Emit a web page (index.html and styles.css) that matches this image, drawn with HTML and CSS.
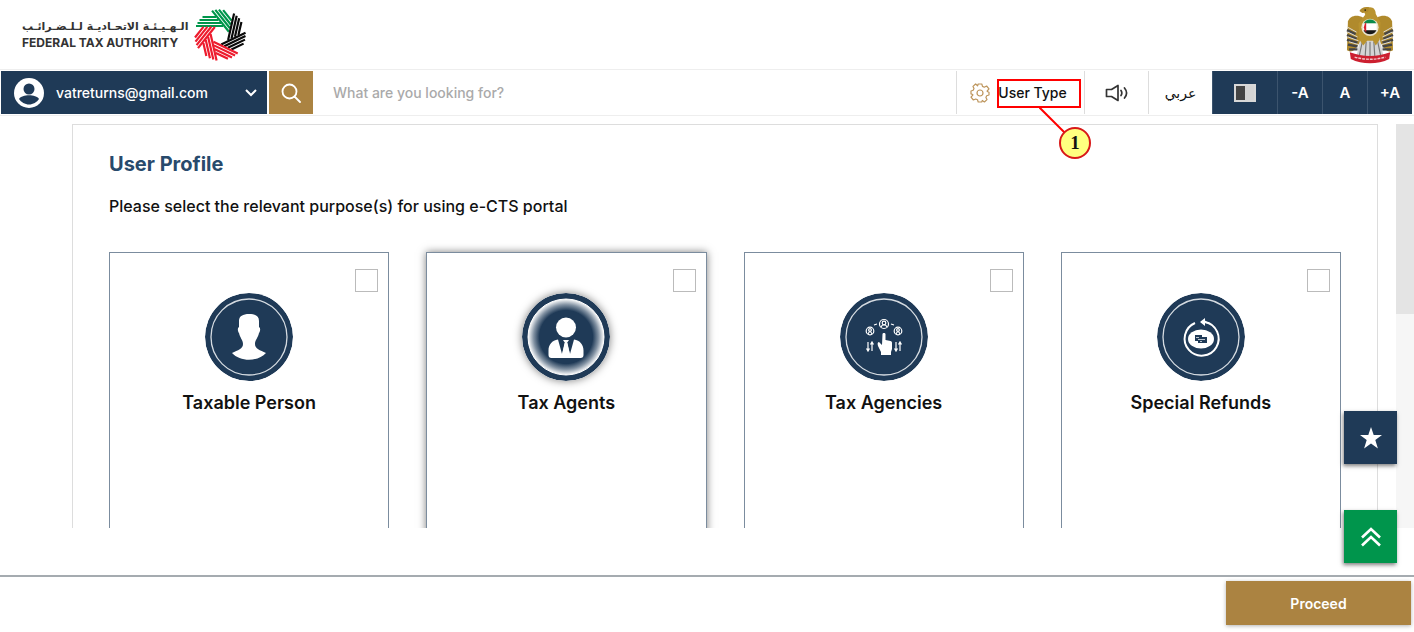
FILE: index.html
```html
<!DOCTYPE html>
<html lang="en">
<head>
    <meta charset="UTF-8">
    <meta name="viewport" content="width=device-width, initial-scale=1.0">
    <title>User Profile - Federal Tax Authority</title>
    <link rel="stylesheet" href="styles.css">
</head>
<body>
    <header class="header">
        <a class="brand" href="#">
            <span class="brand-text">
                <span class="brand-ar" lang="ar" dir="rtl">الـهـيـئـة الاتحـاديـة لـلـضـرائـب</span>
                <span class="brand-en">FEDERAL TAX AUTHORITY</span>
            </span>
            <svg class="brand-logo" viewBox="-27 -27 54 54" fill="none" stroke-width="2.200">
                <defs>
                    <path id="stripes" d="M-24-9H3M-22.500-12H1M-20.500-15H-1.500M-17.500-18H-4"/>
                </defs>
                <g stroke="#00964b">
                    <use href="#stripes"/>
                    <use href="#stripes" transform="rotate(51.4)"/>
                </g>
                <g stroke="#0a0a0a">
                    <use href="#stripes" transform="rotate(102.8)"/>
                    <use href="#stripes" transform="rotate(154.3)"/>
                </g>
                <g stroke="#ed1c2e">
                    <use href="#stripes" transform="rotate(205.7)"/>
                    <use href="#stripes" transform="rotate(257.1)"/>
                    <use href="#stripes" transform="rotate(308.6)"/>
                </g>
            </svg>
        </a>
        <svg class="emblem" viewBox="0 0 50 62">
            <!-- wings -->
            <path d="M18 13C11 9 4 11 2 17L1 47c3 2 6 1 8-1l9-12z" fill="#b08a2c"/>
            <path d="M32 13c7-4 14-2 16 4l1 30c-3 2-6 1-8-1l-9-12z" fill="#b08a2c"/>
            <path d="M1 26l9 4M1 31l10 4M1 36l11 3M2 41l10 2M3 46l9 0M49 26l-9 4M49 31l-10 4M49 36l-11 3M48 41l-10 2M47 46l-9 0" stroke="#454545" stroke-width="2.500"/>
            <path d="M2 23l9 5M2 28l10 5M2 33l11 4M3 38l10 3M48 23l-9 5M48 28l-10 5M48 33l-11 4M47 38l-10 3" stroke="#dedede" stroke-width="1"/>
            <!-- tail and body -->
            <path d="M15 34h20l4 19H11z" fill="#d4d4d4"/>
            <path d="M17 38l-3 14M21 38l-1 15M25 38v15M29 38l1 15M33 38l3 14" stroke="#777" stroke-width="1.200"/>
            <path d="M17 8c1-4 4-6 8-6 4 0 6 3 6 7l5 9-1 18-4 6-3-5h-6l-4 5-4-6-1-17 7-9-1-3z" fill="#b9932f"/>
            <path d="M14 6c1-3 5-5 10-4l-1 5-6 1z" fill="#b08a2c"/>
            <circle cx="20" cy="5" r="0.900" fill="#2b2413"/>
            <!-- flag disc -->
            <circle cx="25" cy="23" r="9" fill="#e9e2cb"/>
            <path d="M18.300 19a7.500 7.500 0 0 1 13.400 0z" fill="#098b4a"/>
            <path d="M18 19h14v7H18z" fill="#fff"/>
            <path d="M18.300 26a7.500 7.500 0 0 0 13.400 0z" fill="#171717"/>
            <path d="M21 17.500v11a7.500 7.500 0 0 1 0-11z" fill="#d9202c"/>
            <!-- ribbon -->
            <path d="M4 49c13 5 29 5 42 0l-1 7c-12 6-28 6-40 0z" fill="#cc1f2f"/>
            <path d="M9 54c10 3 22 3 32 0" fill="none" stroke="#f3c4c7" stroke-width="1.500" stroke-dasharray="3 1"/>
        </svg>
    </header>

    <nav class="toolbar">
        <button class="account" type="button">
            <svg class="avatar" viewBox="0 0 30 30">
                <circle cx="15" cy="15" r="15" fill="#fff"/>
                <circle cx="15" cy="11" r="5.500" fill="#1f3a57"/>
                <path d="M5 21c3-5 17-5 20 0-2 3-6 5.500-10 5.500S7 24 5 21z" fill="#1f3a57"/>
            </svg>
            <span class="account-name">vatreturns@gmail.com</span>
            <svg class="chevron" viewBox="0 0 12 8" fill="none" stroke="#fff" stroke-width="2"><path d="M1 1l5 5 5-5"/></svg>
        </button>
        <button class="search-btn" type="button" aria-label="Search">
            <svg class="search-icon" viewBox="0 0 20 20" fill="none" stroke="#fff" stroke-width="1.800" stroke-linecap="round">
                <circle cx="8.500" cy="8.500" r="7"/><path d="M13.500 13.500L19 19"/>
            </svg>
        </button>
        <input class="search-input" type="search" placeholder="What are you looking for?" aria-label="Search the portal">

        <button class="tool user-type" type="button">
            <svg class="gear" viewBox="-10 -10 20 20" fill="none" stroke="#bd955c" stroke-width="1.200" stroke-linejoin="round">
                <path d="M-1.800-9H1.800L2.500-6.600 4.300-5.800 6.600-7 9-4.200 7.200-2 7.200-1.500 9-.8V2L6.700 2.700 5.900 4.400 7 6.600 4.400 9 2.300 7.500 1.700 9H-1.800L-2.500 6.800-4.300 6-6.600 7-9 4.200-7.200 2.100V1.500L-9 .9V-2L-6.800-2.700-6-4.400-7-6.600-4.400-9-2.400-7.200z"/>
                <circle r="3"/>
            </svg>
            <span class="user-type-label">User Type</span>
            <span class="callout">
                <svg class="callout-line" viewBox="0 0 32 32"><path d="M0 0l32 32" stroke="#ff0000" stroke-width="2"/></svg>
                <span class="callout-number">1</span>
            </span>
        </button>
        <button class="tool sound" type="button" aria-label="Read aloud">
            <svg class="sound-icon" viewBox="0 0 24 18" fill="none" stroke="#333" stroke-width="1.700" stroke-linecap="round" stroke-linejoin="round">
                <path d="M1.500 5.500h5L13 1.500v15l-6.500-4h-5zM16 6.500c1 1.500 1 3.500 0 5M19.500 4c2.500 3 2.500 7 0 10"/>
            </svg>
        </button>
        <button class="tool lang" type="button" lang="ar">عربي</button>
        <button class="tool-dark contrast" type="button" aria-label="Contrast">
            <span class="contrast-icon"></span>
        </button>
        <button class="tool-dark" type="button">-A</button>
        <button class="tool-dark" type="button">A</button>
        <button class="tool-dark" type="button">+A</button>
    </nav>

    <main class="content">
        <section class="panel">
            <h1 class="title">User Profile</h1>
            <p class="intro">Please select the relevant purpose(s) for using e-CTS portal</p>
            <div class="cards">
                <label class="card">
                    <input class="card-check" type="checkbox">
                    <svg class="card-icon" viewBox="0 0 88 88">
                        <circle cx="44" cy="44" r="44" fill="#1f3a57"/>
                        <circle cx="44" cy="44" r="38" fill="none" stroke="#d5dbe1" stroke-width="1.300"/>
                        <path d="M34 28c0-5 4-7 10-7s10 2 10 7v6c2 1 1 5 0 6-1 5-4 7-4 11 0 5 5 6 11 9-8 9-26 9-34 0 6-3 11-4 11-9 0-4-3-6-4-11-1-1-2-5 0-6z" fill="#fff"/>
                    </svg>
                    <span class="card-name">Taxable Person</span>
                </label>
                <label class="card card-active">
                    <input class="card-check" type="checkbox">
                    <svg class="card-icon" viewBox="0 0 88 88">
                        <defs>
                            <radialGradient id="glow">
                                <stop offset="0.700" stop-color="#1f3a57"/>
                                <stop offset="0.850" stop-color="#8191a2"/>
                                <stop offset="1" stop-color="#fff"/>
                            </radialGradient>
                        </defs>
                        <circle cx="44" cy="44" r="44" fill="#1f3a57"/>
                        <circle cx="44" cy="44" r="38" fill="url(#glow)" stroke="#fff"/>
                        <circle cx="44" cy="34.500" r="10" fill="#fff"/>
                        <path d="M36 46.500c-6 1-9.500 5-9.500 11V62c0 2 1 3 3 3h29c2 0 3-1 3-3v-4.500c0-6-3.500-10-9.500-11L48 61l-3-11 2-3h-6l2 3-3 11z" fill="#fff"/>
                        <path d="M42.500 50h3L48 62l-4 3-4-3z" fill="#fff"/>
                    </svg>
                    <span class="card-name">Tax Agents</span>
                </label>
                <label class="card">
                    <input class="card-check" type="checkbox">
                    <svg class="card-icon" viewBox="0 0 88 88">
                        <circle cx="44" cy="44" r="44" fill="#1f3a57"/>
                        <circle cx="44" cy="44" r="38" fill="none" stroke="#d5dbe1" stroke-width="1.300"/>
                        <g fill="none" stroke="#fff" stroke-width="1.200">
                            <circle cx="44" cy="31" r="4.500"/><circle cx="44" cy="30" r="1.800"/><path d="M41 34c1-3 5-3 6 0"/>
                            <circle cx="30" cy="38" r="3.800"/><circle cx="30" cy="37" r="1.400"/><path d="M28 41c1-3 3-3 4 0"/>
                            <circle cx="58" cy="38" r="3.800"/><circle cx="58" cy="37" r="1.400"/><path d="M56 41c1-3 3-3 4 0"/>
                            <path d="M34 32l3-1M51 31l3 1M28 49v8M26.500 55.500L28 58l1.500-2.500M32 58v-8M30.500 51.500L32 49l1.500 2.500M56 49v8M54.500 55.500L56 58l1.500-2.500M60 58v-8M58.500 51.500L60 49l1.500 2.500"/>
                        </g>
                        <path d="M42.500 41c0-1.500 3-1.500 3 0v6l5 1c1 0 1.500 1 1.500 2v6l-1 3v3H41v-3l-3-6c-1-3 0-4 1-4l3 3z" fill="#fff"/>
                    </svg>
                    <span class="card-name">Tax Agencies</span>
                </label>
                <label class="card">
                    <input class="card-check" type="checkbox">
                    <svg class="card-icon" viewBox="0 0 88 88">
                        <circle cx="44" cy="44" r="44" fill="#1f3a57"/>
                        <circle cx="44" cy="44" r="38" fill="none" stroke="#d5dbe1" stroke-width="1.300"/>
                        <path d="M38 30a17 17 0 1 0 10-1" fill="none" stroke="#fff" stroke-width="2"/>
                        <path d="M43 29l5-4v2.500l4 3-4-.5v3z" fill="#fff"/>
                        <ellipse cx="44" cy="46" rx="13" ry="9.500" fill="#fff"/>
                        <path d="M38 42h7v2h5v6h-9v-2h-3z" fill="#1f3a57"/>
                        <path d="M39 44.500h3M41 46.500h7M43 48.500h2" stroke="#fff" stroke-width="0.700"/>
                    </svg>
                    <span class="card-name">Special Refunds</span>
                </label>
            </div>
        </section>
        <div class="scrollbar"><div class="scrollbar-thumb"></div></div>
    </main>

    <div class="floating">
        <button class="float-btn" type="button" aria-label="Favourites">
            <svg class="float-icon" viewBox="0 0 22 22"><path d="M11 0l2.700 8H22l-6.700 5 2.600 8.500L11 16.500l-6.900 5L6.700 13 0 8h8.300z" fill="#fff"/></svg>
        </button>
        <button class="float-btn float-top" type="button" aria-label="Back to top">
            <svg class="float-icon" viewBox="0 0 22 22" fill="none" stroke="#fff" stroke-width="2.600"><path d="M2 11.500l9-8.500 9 8.500M2 19.500l9-8.500 9 8.500"/></svg>
        </button>
    </div>

    <footer class="footer">
        <button class="proceed" type="button">Proceed</button>
    </footer>
</body>
</html>
```
FILE: styles.css
```css
* {
    box-sizing: border-box;
    margin: 0;
    padding: 0;
}

body {
    display: flex;
    flex-direction: column;
    height: 100vh;
    overflow: hidden;
    font-family: Inter, "DejaVu Sans", sans-serif;
    font-size: 14px;
    color: #111;
    background-color: #fff;
}

button,
input {
    font: inherit;
    color: inherit;
    border: none;
    background: none;
}

button {
    cursor: pointer;
}

.header {
    display: flex;
    justify-content: space-between;
    align-items: center;
    height: 70px;
    padding: 0 20px 0 22px;
    border-bottom: 1px solid #eee;
}

.brand {
    display: flex;
    align-items: center;
    gap: 4px;
    color: #333;
    text-decoration: none;
}

.brand-text {
    display: flex;
    flex-direction: column;
}

.brand-ar {
    font-family: "DejaVu Sans", sans-serif;
    font-size: 11px;
    font-weight: bold;
    line-height: 16px;
}

.brand-en {
    font-size: 12px;
    font-weight: 700;
    line-height: 16px;
}

.brand-logo {
    width: 54px;
    height: 54px;
}

.emblem {
    width: 48px;
    height: 62px;
}

/* toolbar */
.toolbar {
    display: flex;
    height: 46px;
    padding: 1px 2px 1px 1px;
    border-bottom: 1px solid #eee;
    font-weight: 500;
}

.account {
    display: flex;
    align-items: center;
    width: 266px;
    padding: 0 10px 0 13px;
    background-color: #1f3a57;
    color: #fff;
}

.avatar {
    width: 30px;
    height: 30px;
    margin-right: 12px;
}

.chevron {
    width: 12px;
    height: 8px;
    margin-left: auto;
}

.search-btn {
    display: flex;
    align-items: center;
    justify-content: center;
    width: 44px;
    margin-left: 2px;
    background-color: #ab8341;
}

.search-icon {
    width: 20px;
    height: 20px;
}

.search-input {
    flex: 1;
    min-width: 0;
    padding: 0 20px;
    outline: none;
}

.search-input::placeholder {
    color: #aaa;
}

.tool {
    display: flex;
    align-items: center;
    justify-content: center;
    width: 64px;
    border-left: 1px solid #ddd;
}

.user-type {
    position: relative;
    width: 128px;
    gap: 4px;
}

.gear {
    width: 20px;
    height: 20px;
}

.user-type-label {
    padding: 0 4px;
}

.callout {
    position: absolute;
    top: 8px;
    right: 3px;
    width: 84px;
    height: 29px;
    border: 2px solid #ff0000;
}

.callout-line {
    position: absolute;
    top: 26px;
    left: 40px;
    width: 32px;
    height: 32px;
}

.callout-number {
    position: absolute;
    top: 46px;
    left: 60px;
    width: 32px;
    height: 32px;
    border: 2px solid #d81818;
    border-radius: 50%;
    background-color: #ffff80;
    font-family: "Liberation Serif", serif;
    font-size: 19px;
    font-weight: bold;
    line-height: 28px;
    text-align: center;
    z-index: 1;
}

.sound-icon {
    width: 24px;
    height: 18px;
}

.lang {
    font-family: "DejaVu Sans", sans-serif;
}

.tool-dark {
    display: flex;
    align-items: center;
    justify-content: center;
    width: 45px;
    border-left: 1px solid #3c546e;
    background-color: #1f3a57;
    color: #fff;
    font-size: 15px;
    font-weight: 600;
}

.contrast {
    width: 65px;
}

.contrast-icon {
    width: 22px;
    height: 18px;
    border: 2px solid #d8d8d8;
    background: linear-gradient(to right, #444 50%, #d4d4d4 50%);
}

/* scrolling area */
.content {
    display: flex;
    flex: 1;
    min-height: 0;
    margin: 8px 0 47px 72px;
    overflow: hidden;
}

.panel {
    flex: 1;
    padding: 27px 36px;
    border: 1px solid #ddd;
    border-bottom: none;
    margin-right: 18px;
}

.title {
    font-size: 20px;
    font-weight: 700;
    line-height: 24px;
    color: #284a6c;
}

.intro {
    margin: 19px 0 35px;
    font-size: 16px;
    font-weight: 500;
    line-height: 22px;
}

.cards {
    display: grid;
    grid-template-columns: repeat(4, 1fr);
    gap: 37px;
}

.card {
    display: flex;
    flex-direction: column;
    align-items: center;
    min-height: 360px;
    padding: 16px 10px;
    border: 1px solid #7b8c9e;
}

.card-active {
    box-shadow: 0 0 8px rgba(0, 0, 0, 0.5);
}

.card-check {
    appearance: none;
    align-self: flex-end;
    width: 23px;
    height: 23px;
    border: 1px solid #bbb;
    background-color: #fff;
}

.card-check:checked {
    background-color: #1f3a57;
}

.card-icon {
    width: 88px;
    height: 88px;
    margin: 1px 0 10px;
    border-radius: 50%;
}

.card-active .card-icon {
    box-shadow: 0 0 8px rgba(0, 0, 0, 0.5);
}

.card-name {
    font-size: 18px;
    font-weight: 600;
    line-height: 24px;
}

.scrollbar {
    width: 18px;
    background-color: #f6f6f6;
}

.scrollbar-thumb {
    height: 47%;
    background-color: #e4e4e4;
}

.floating {
    position: fixed;
    right: 17px;
    bottom: 69px;
    display: flex;
    flex-direction: column;
    gap: 46px;
}

.float-btn {
    display: flex;
    align-items: center;
    justify-content: center;
    width: 53px;
    height: 53px;
    background-color: #1f3a57;
    box-shadow: -1px 2px 4px rgba(0, 0, 0, 0.5);
}

.float-top {
    background-color: #00954c;
}

.float-icon {
    width: 22px;
    height: 22px;
}

.footer {
    display: flex;
    justify-content: flex-end;
    padding: 4px 3px 7px;
    border-top: 2px solid #a5abb0;
}

.proceed {
    width: 185px;
    height: 44px;
    background-color: #ab8341;
    box-shadow: 0 1px 4px rgba(0, 0, 0, 0.3);
    color: #fff;
    font-weight: 600;
}
```
